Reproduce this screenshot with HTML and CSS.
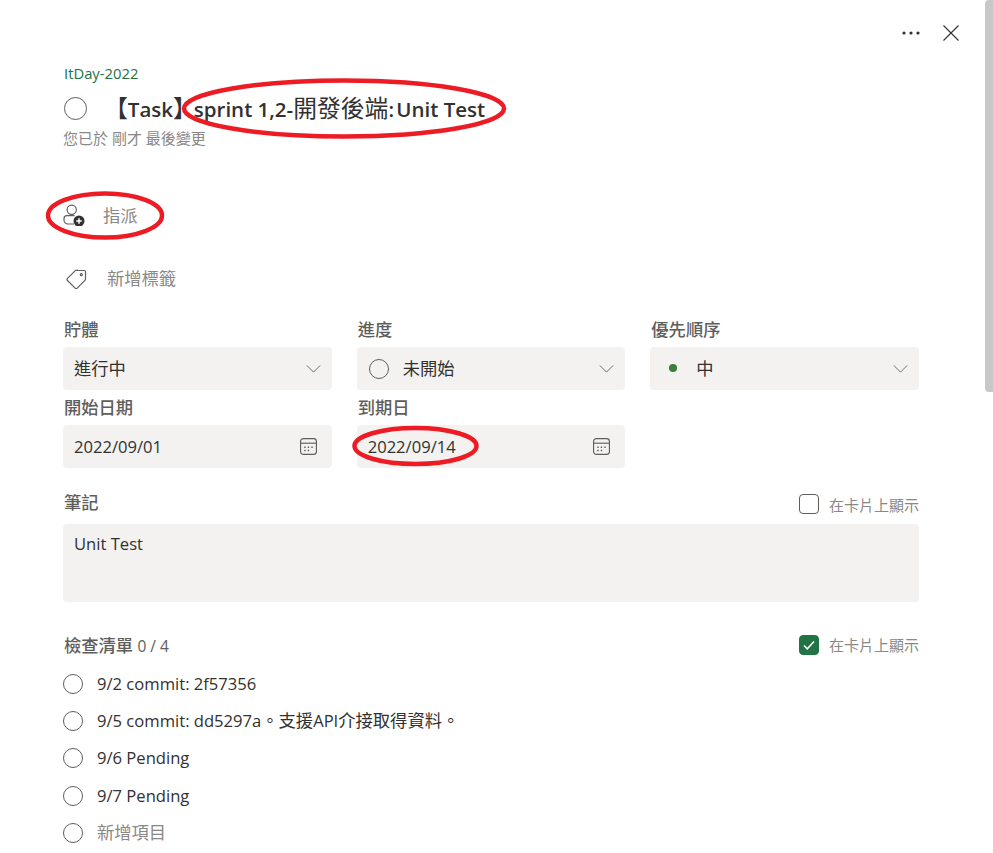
FILE: index.html
```html
<!DOCTYPE html>
<html lang="zh-Hant">
<head>
<meta charset="utf-8">
<title>Task</title>
<link rel="stylesheet" href="styles.css">
</head>
<body>
<main class="panel">
  <div class="actions">
    <svg class="more" width="18" height="4" viewBox="0 0 18 4"><circle cx="2" cy="2" r="1.600"/><circle cx="9" cy="2" r="1.600"/><circle cx="16" cy="2" r="1.600"/></svg>
    <svg class="close" width="16" height="16" viewBox="0 0 16 16"><path d="M.5.5l15 15M15.500 .5l-15 15"/></svg>
  </div>
  <div class="bucket-name">ItDay-2022</div>
  <div class="title-row">
    <span class="circle circle-lg"></span>
    <h1 class="title"><span class="title-cjk">【</span>Task<span class="title-cjk title-close">】</span>sprint 1,2-<span class="title-cjk">開發後端</span><span class="title-colon">: </span>Unit Test</h1>
  </div>
  <div class="changed">您已於 剛才 最後變更</div>

  <div class="assign-row">
    <svg class="assign-icon" width="24" height="24" viewBox="0 0 24 24">
      <circle cx="8.700" cy="7.700" r="4.600" class="line"/>
      <path class="line" d="M11.500 13.600H4a3 3 0 0 0-3 3V18a4 4 0 0 0 4 4h6"/>
      <circle cx="16" cy="19" r="5.500" class="fill"/>
      <path class="plus" d="M16 16.200v5.600M13.200 19h5.600"/>
    </svg>
    <span class="assign-text cjk">指派</span>
  </div>
  <div class="label-row">
    <svg class="tag-icon" width="24" height="24" viewBox="0 0 24 24"><path class="line" d="M14 5.500h7a1.500 1.500 0 0 1 1.500 1.500v7a2 2 0 0 1-.6 1.400l-7.700 7.700a1.500 1.500 0 0 1-2.100 0l-7.600-7.600a1.500 1.500 0 0 1 0-2.100l8-8a2 2 0 0 1 1.500-.4z"/><circle class="line" cx="18.300" cy="9.700" r="1"/></svg>
    <span class="label-text cjk">新增標籤</span>
  </div>

  <div class="fields">
    <div class="field">
      <div class="field-label cjk">貯體</div>
      <div class="control"><span class="value cjk">進行中</span><svg class="chev" width="15" height="8" viewBox="0 0 16 9"><path d="M.5.5L8 8 15.500.5"/></svg></div>
    </div>
    <div class="field">
      <div class="field-label cjk">進度</div>
      <div class="control"><span class="circle circle-md control-circle"></span><span class="value value-icon cjk">未開始</span><svg class="chev" width="15" height="8" viewBox="0 0 16 9"><path d="M.5.5L8 8 15.500.5"/></svg></div>
    </div>
    <div class="field">
      <div class="field-label cjk">優先順序</div>
      <div class="control"><span class="dot"></span><span class="value value-dot cjk">中</span><svg class="chev" width="15" height="8" viewBox="0 0 16 9"><path d="M.5.5L8 8 15.500.5"/></svg></div>
    </div>
    <div class="field">
      <div class="field-label cjk">開始日期</div>
      <div class="control"><span class="value">2022/09/01</span><svg class="cal" width="17" height="17" viewBox="0 0 18 18"><rect class="line" x=".6" y=".6" width="16.800" height="16.800" rx="3"/><path class="line" d="M.5 5.500h17"/><path class="cal-dots" d="M4.500 9h1.500v1.500h-1.500zM8.200 9h1.500v1.500h-1.500zM12 9h1.500v1.500h-1.500zM4.500 12.500h1.500v1.500h-1.500zM8.200 12.500h1.500v1.500h-1.500z"/></svg></div>
    </div>
    <div class="field">
      <div class="field-label cjk">到期日</div>
      <div class="control"><span class="value">2022/09/14</span><svg class="cal" width="17" height="17" viewBox="0 0 18 18"><rect class="line" x=".6" y=".6" width="16.800" height="16.800" rx="3"/><path class="line" d="M.5 5.500h17"/><path class="cal-dots" d="M4.500 9h1.500v1.500h-1.500zM8.200 9h1.500v1.500h-1.500zM12 9h1.500v1.500h-1.500zM4.500 12.500h1.500v1.500h-1.500zM8.200 12.500h1.500v1.500h-1.500z"/></svg></div>
    </div>
  </div>

  <div class="section-head notes-head">
    <span class="field-label cjk">筆記</span>
    <span class="show-card show-card-notes"><span class="check"></span><span class="show-text">在卡片上顯示</span></span>
  </div>
  <div class="notes">Unit Test</div>

  <div class="section-head checklist-head">
    <span class="field-label"><span class="cjk">檢查清單</span> <span class="count">0 / 4</span></span>
    <span class="show-card show-card-list"><span class="check check-on"><svg width="14" height="14" viewBox="0 0 14 14"><path d="M2 7.500l3.300 3.300L12 3.500"/></svg></span><span class="show-text">在卡片上顯示</span></span>
  </div>
  <ul class="checklist">
    <li class="item"><span class="circle circle-md"></span><span>9/2 commit: 2f57356</span></li>
    <li class="item"><span class="circle circle-md"></span><span>9/5 commit: dd5297a<span class="cjk">。支援</span>API<span class="cjk">介接取得資料。</span></span></li>
    <li class="item"><span class="circle circle-md"></span><span>9/6 Pending</span></li>
    <li class="item"><span class="circle circle-md"></span><span>9/7 Pending</span></li>
    <li class="item item-new"><span class="circle circle-md"></span><span class="cjk">新增項目</span></li>
  </ul>
</main>
<div class="scroll-thumb"></div>
<svg class="marks" width="993" height="853" viewBox="0 0 993 853">
  <ellipse cx="344" cy="108.500" rx="160" ry="28"/>
  <ellipse cx="105" cy="215.500" rx="57" ry="22"/>
  <ellipse cx="415.500" cy="446" rx="61" ry="18"/>
</svg>
</body>
</html>
```
FILE: styles.css
```css
* { box-sizing: border-box; }
html, body { height: 100%; }
body {
  margin: 0;
  overflow: hidden;
  background: #fff;
  color: #323130;
  font-family: "Open Sans", "Noto Sans CJK TC", sans-serif;
  font-size: 16.600px;
}
.cjk { font-size: 17.300px; }
.panel {
  width: 919px;
  padding: 0 0 0 63px;
}
.actions {
  width: 896px;
  height: 41px;
  padding: 25px 0 0 0;
  display: flex;
  align-items: center;
  justify-content: flex-end;
  gap: 23px;
}
.more { fill: #323130; }
.close { fill: none; stroke: #323130; stroke-width: 1.100; }
.bucket-name {
  margin: 23px 0 0 1px;
  height: 20px;
  line-height: 18px;
  font-size: 14.800px;
  font-weight: 500;
  color: #217346;
}
.title-row {
  display: flex;
  align-items: center;
  margin: 4px 0 0 1px;
  height: 42px;
  padding-bottom: 2px;
}
.title {
  margin: 0 0 0 17px;
  font-size: 20.500px;
  font-weight: 600;
  line-height: 30px;
  color: #323130;
}
.title-cjk { font-size: 23.800px; font-weight: 400; }
.title-close { letter-spacing: -3px; }
.title-colon { letter-spacing: -1.500px; }
.circle {
  display: block;
  flex: none;
  border-radius: 50%;
  border: 1.500px solid #605e5c;
}
.circle-lg { width: 23px; height: 23px; }
.circle-md { width: 20px; height: 20px; }
.control-circle { margin-left: 1px; }
.changed {
  height: 19px;
  line-height: 16px;
  font-size: 15px;
  color: #8a8886;
}
.assign-row, .label-row { display: flex; align-items: center; height: 24px; }
.assign-row { margin: 53px 0 0 0; }
.label-row { margin: 39px 0 0 0; }
.line { fill: none; stroke: #605e5c; stroke-width: 1.200; }
.fill { fill: #323130; }
.plus { stroke: #fff; stroke-width: 1.500; fill: none; }
.assign-text { margin-left: 16px; color: #8a8886; }
.label-text { margin-left: 20px; color: #8a8886; }
.fields {
  display: grid;
  grid-template-columns: repeat(3, 1fr);
  column-gap: 25px;
  margin-top: 29px;
  width: 856px;
}
.field-label {
  font-weight: 500;
  color: #605e5c;
  line-height: 24px;
  padding-left: 1px;
}
.fields .field-label { height: 29px; }
.field:nth-child(n+4) .field-label { margin-top: 6px; }
.control {
  display: flex;
  align-items: center;
  height: 43px;
  padding: 0 11px;
  background: #f3f2f1;
  border-radius: 4px;
}
.value { flex: 1; line-height: 22px; }
.value-icon { margin-left: 14px; }
.value-dot { margin-left: 19px; }
.chev { fill: none; stroke: #605e5c; stroke-width: 1; }
.cal { margin-right: 4px; }
.cal-dots { fill: #605e5c; }
.dot {
  width: 8px;
  height: 8px;
  margin-left: 8px;
  margin-top: -2px;
  border-radius: 50%;
  background: #3c7d3a;
}
.section-head {
  display: flex;
  width: 856px;
  justify-content: space-between;
  align-items: center;
  height: 24px;
}
.notes-head { margin-top: 23px; }
.show-card { display: flex; align-items: center; gap: 10px; }
.show-card-notes { margin-top: 2px; }
.show-card-list { margin-bottom: 3px; }
.show-text { font-size: 15px; color: #8a8886; }
.check {
  display: flex;
  width: 20px;
  height: 20px;
  align-items: center;
  justify-content: center;
  border: 1.500px solid #605e5c;
  border-radius: 4px;
}
.check-on { background: #217346; border-color: #217346; }
.check-on path { fill: none; stroke: #fff; stroke-width: 1.500; }
.notes {
  width: 856px;
  height: 78px;
  margin-top: 9px;
  padding: 9px 11px;
  background: #f3f2f1;
  border-radius: 4px;
  line-height: 22px;
}
.checklist-head { margin-top: 32px; }
.count { font-size: 15.500px; font-weight: 400; }
.checklist { list-style: none; margin: 7px 0 0; padding: 0; }
.item {
  display: flex;
  align-items: center;
  gap: 14px;
  height: 37.300px;
  line-height: 22px;
}
.item-new { color: #8a8886; }
.scroll-thumb {
  position: absolute;
  top: 0;
  right: 0;
  width: 8px;
  height: 392px;
  background: #c8c8c8;
  border-radius: 4px 0 0 4px;
}
.marks {
  position: absolute;
  top: 0;
  left: 0;
  pointer-events: none;
}
.marks ellipse { fill: none; stroke: #ed1c24; stroke-width: 4.500; }
```
